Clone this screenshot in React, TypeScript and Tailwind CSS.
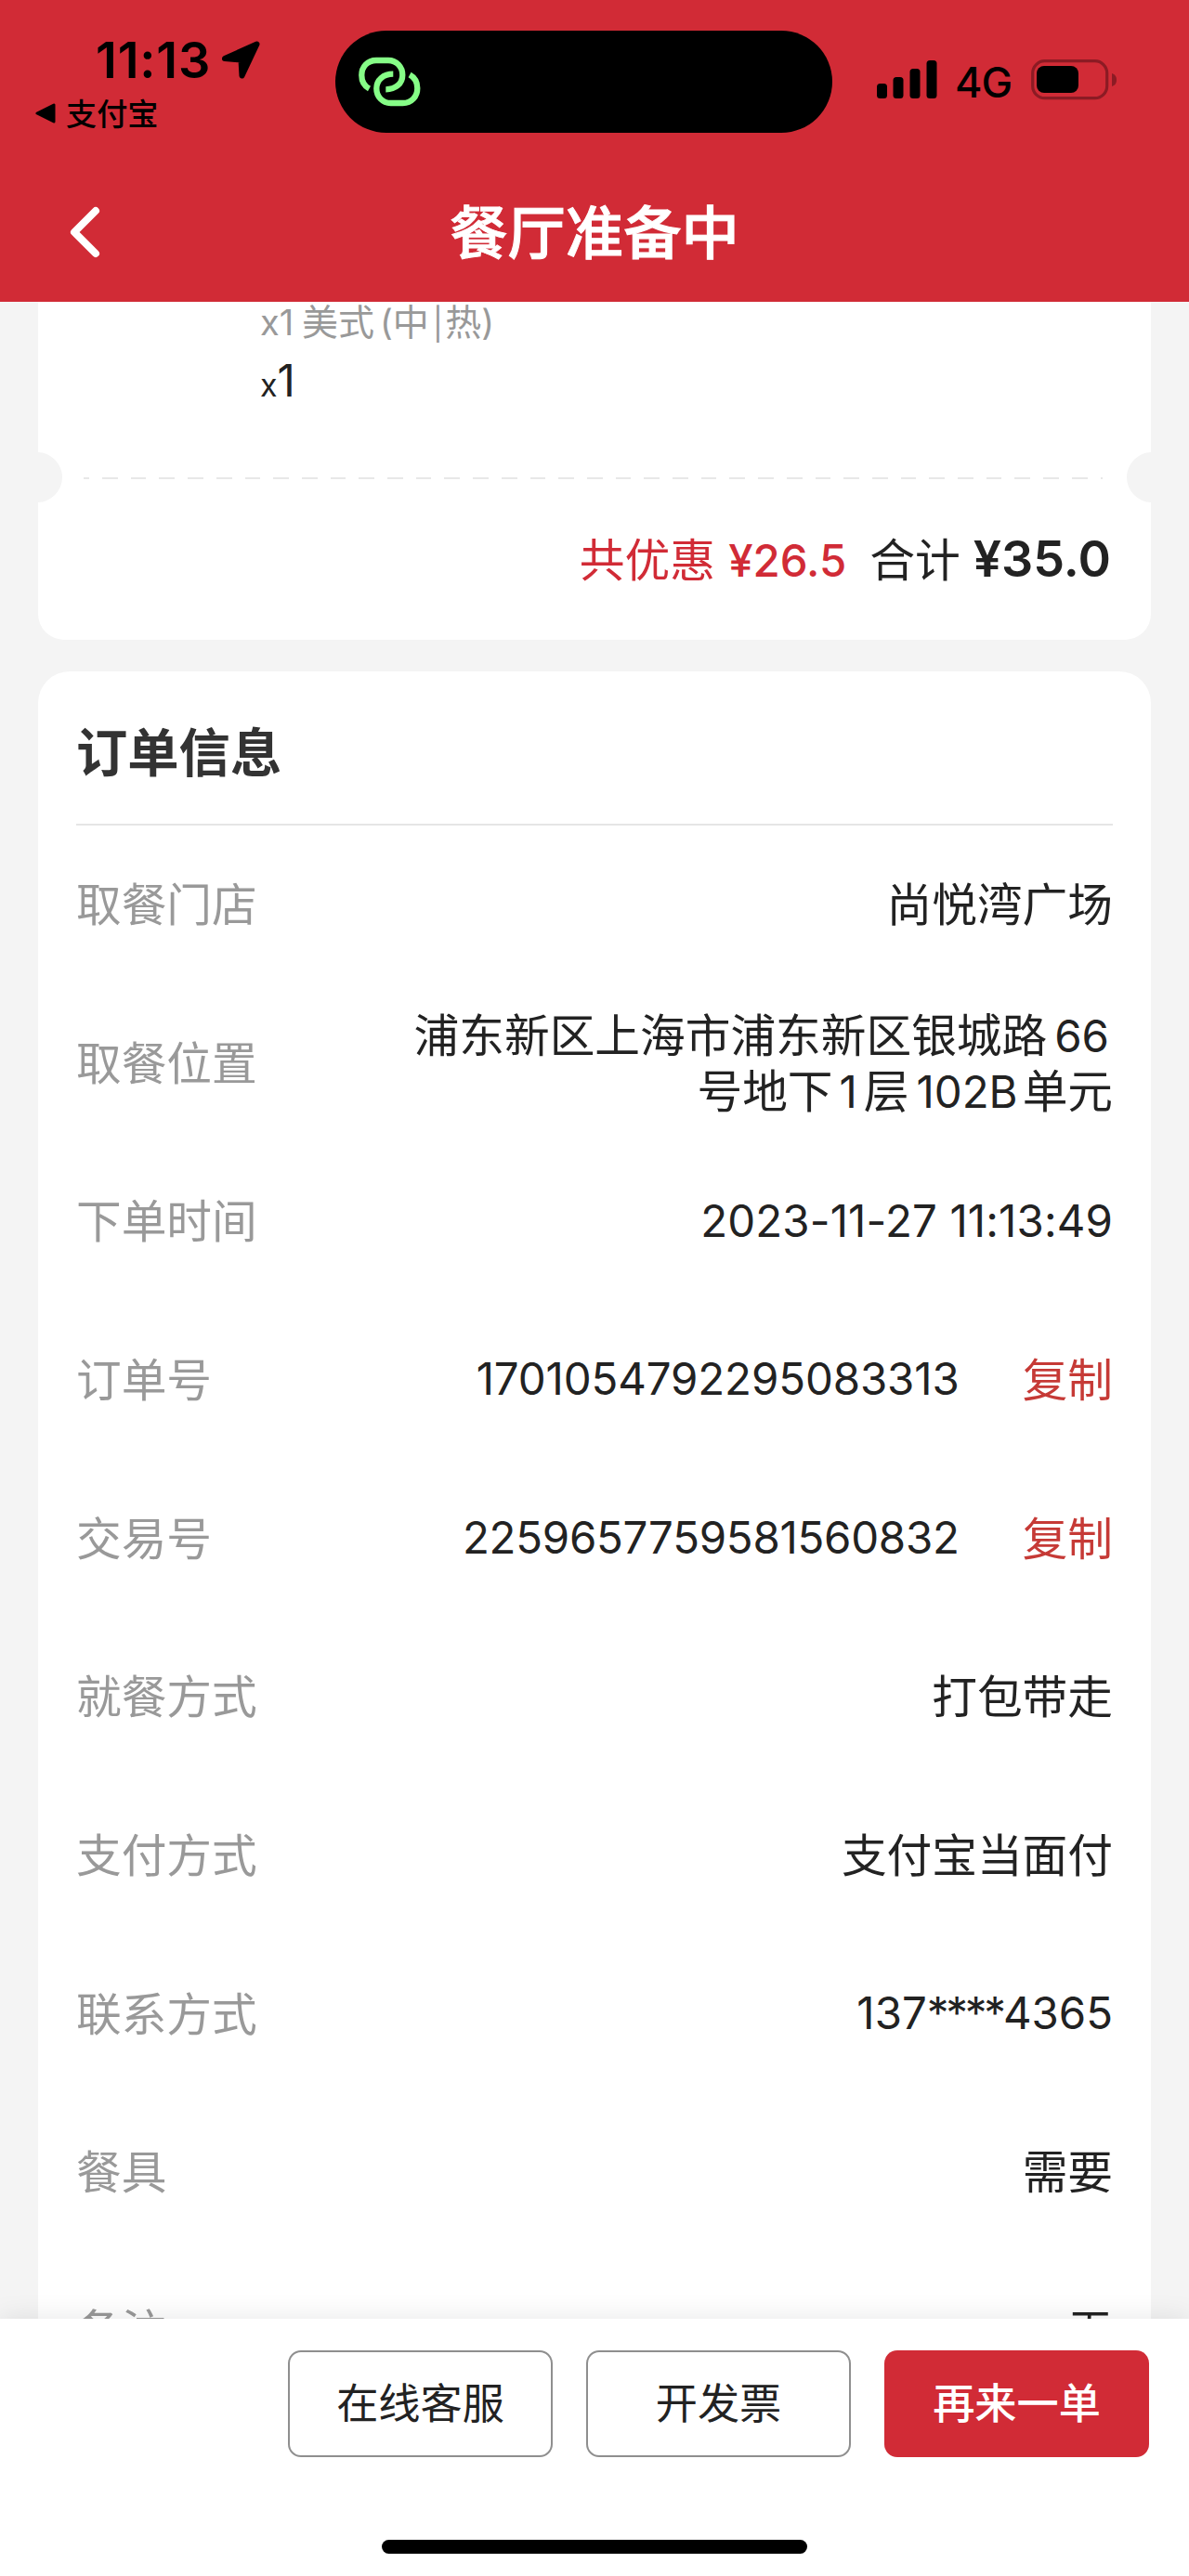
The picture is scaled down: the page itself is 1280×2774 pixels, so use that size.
import type { ReactNode } from 'react';

interface OrderRow {
  label: string;
  value: ReactNode;
  copyable?: boolean;
}

const num = "font-['Inter'] text-[47.4px]";

const orderRows: OrderRow[] = [
  { label: '取餐门店', value: '尚悦湾广场' },
  {
    label: '取餐位置',
    value: (
      <div className="pt-[3px]">
        浦东新区上海市浦东新区银城路
        <span className={`${num} ml-[8px] mr-[4px]`}>66</span>
        <br />
        号地下
        <span className={`${num} mx-[7px]`}>1</span>
        层
        <span className={`${num} ml-[8px] mr-[5px]`}>102B</span>
        单元
      </div>
    ),
  },
  { label: '下单时间', value: <span className={`${num} tracking-[0.15px]`}>2023-11-27 11:13:49</span> },
  { label: '订单号', value: <span className={`${num} tracking-[-0.1px]`}>1701054792295083313</span>, copyable: true },
  { label: '交易号', value: <span className={`${num} tracking-[-0.25px]`}>2259657759581560832</span>, copyable: true },
  { label: '就餐方式', value: '打包带走' },
  { label: '支付方式', value: '支付宝当面付' },
  {
    label: '联系方式',
    value: (
      <span className={num}>
        137<span className="tracking-[-3.2px]">****</span>4365
      </span>
    ),
  },
  { label: '餐具', value: '需要' },
  { label: '备注', value: '无' },
];

function StatusBar() {
  return (
    <div className="flex h-[160px] text-black">
      <div className="w-[361px] pt-[37px]">
        <div className="flex h-[56px] items-center pl-[103px]">
          <span className="w-[123px] font-['Inter'] text-[54px] font-semibold leading-none tracking-[0.8px]">11:13</span>
          <svg className="ml-[12px] h-[42px] w-[42px]" viewBox="0 0 42 42">
            <path d="M38.5 3.5 L22.5 37.5 L21.5 20.5 L4 19 Z" fill="#000" stroke="#000" strokeWidth="6" strokeLinejoin="round" />
          </svg>
        </div>
        <div className="flex h-[58px] items-center gap-[11px] pl-[38px]">
          <svg className="h-[22px] w-[22px]" viewBox="0 0 22 22">
            <path d="M2 11 L20 2 V20 Z" fill="#000" stroke="#000" strokeWidth="3" strokeLinejoin="round" />
          </svg>
          <span className="pb-[3px] text-[33.2px] font-medium leading-none">支付宝</span>
        </div>
      </div>

      {/* Dynamic island */}
      <div className="mt-[33px] flex h-[110px] w-[535px] items-center rounded-full bg-black pl-[24px]">
        <svg className="h-[66px] w-[70px]" viewBox="0 0 70 66" fill="none" stroke="#86fd87" strokeWidth="6.3">
          <path d="M12.5 40.5 C7 37.5 4.3 32 4.3 26 C4.3 17 10.5 10 20 10 H33 C42 10 48.3 17 48.3 25.7 C48.3 35 41 41.3 30.3 41.3" />
          <path
            d="M12.5 40.5 C7 37.5 4.3 32 4.3 26 C4.3 17 10.5 10 20 10 H33 C42 10 48.3 17 48.3 25.7 C48.3 35 41 41.3 30.3 41.3"
            transform="rotate(180 34.3 33)"
          />
        </svg>
      </div>

      <div className="flex h-[44px] pl-[48px] pt-[64px]">
        <svg className="h-[44px] w-[66px]" viewBox="0 0 66 44" fill="#000">
          <rect x="0" y="26" width="11" height="16" rx="3.5" />
          <rect x="17.5" y="19" width="11" height="23" rx="3.5" />
          <rect x="35.5" y="10" width="11" height="32" rx="3.5" />
          <rect x="53.5" y="1" width="11" height="41" rx="3.5" />
        </svg>
        <span className="ml-[18px] w-[61px] font-['Inter'] text-[45px] font-medium leading-[50px] tracking-[-1px]">4G</span>
        <svg className="ml-[20px] h-[44px] w-[96px]" viewBox="0 0 96 44">
          <rect x="2.7" y="1.7" width="80" height="40" rx="13" fill="none" stroke="#8c1b24" strokeWidth="3.2" />
          <rect x="7" y="7" width="45" height="29" rx="8" fill="#000" />
          <path d="M88 15 C91 16 93 18 93 22 C93 26 91 28 88 29 Z" fill="#8c1b24" />
        </svg>
      </div>
    </div>
  );
}

function Header() {
  return (
    <header className="h-[325px] shrink-0 bg-[#d12b36]">
      <StatusBar />
      <div className="grid h-[180px] grid-cols-[1fr_auto_1fr] items-center">
        <svg className="ml-[73px] h-[60px] w-[36px]" viewBox="0 0 36 60" fill="none">
          <path d="M30 7 L7 30 L30 53" stroke="#fff" strokeWidth="8" strokeLinecap="round" strokeLinejoin="round" />
        </svg>
        <h1 className="pb-[5px] text-[62.3px] font-medium leading-none text-white [-webkit-text-stroke:1px_#fff]">
          餐厅准备中
        </h1>
      </div>
    </header>
  );
}

function SummaryCard() {
  return (
    <section className="relative h-[364px] shrink-0 overflow-hidden rounded-b-[28px] bg-white">
      <div className="h-[189px] pl-[239px] text-[39px] text-[#999]">
        <p className="h-[45px] leading-[39px]">
          <span className="font-['Inter'] text-[38px]">x1</span> 美式
          <span className="ml-[6px] font-['Inter'] text-[38px]">(</span>中
          <span className="ml-[4px] font-['Inter'] text-[34px]">|</span>
          <span className="ml-[2px]">热</span>
          <span className="font-['Inter'] text-[38px]">)</span>
        </p>
        <p className="mt-[11px] font-['Inter'] leading-[58px] text-[#222]">
          <span className="text-[34px]">x</span>
          <span className="text-[47.4px]">1</span>
        </p>
      </div>

      {/* Ticket perforation */}
      <div className="absolute -left-[28px] top-[162px] size-[54px] rounded-full bg-[#f4f4f4]" />
      <div className="absolute -right-[28px] top-[162px] size-[54px] rounded-full bg-[#f4f4f4]" />
      <div className="ml-[49px] mr-[52px] h-[2px] bg-[repeating-linear-gradient(90deg,#e8e8e8_0_6px,transparent_6px_20px,#e8e8e8_20px_30.7px)]" />

      <div className="flex items-baseline justify-end pr-[43px] pt-[48px] text-[48.8px] leading-[72px]">
        <span className="text-[#d12b36]">共优惠</span>
        <span className="ml-[14px] font-['Inter'] text-[47.4px] font-medium text-[#d12b36]">¥26.5</span>
        <span className="ml-[25px] text-[#222]">合计</span>
        <span className="ml-[14px] font-['Inter'] text-[53.8px] font-semibold text-[#222]">¥35.0</span>
      </div>
    </section>
  );
}

function InfoRow({ label, value, copyable }: OrderRow) {
  return (
    <div className="flex h-[170.7px] shrink-0 items-center justify-between pb-[6px] text-[48.7px] leading-[57px]">
      <span className="text-[#999]">{label}</span>
      <div className="flex items-center text-right text-[#222]">
        <div>{value}</div>
        {copyable && <button className="ml-[68px] text-[#c63a36]">复制</button>}
      </div>
    </div>
  );
}

export default function App() {
  return (
    <div className="flex h-[2774px] w-[1280px] flex-col overflow-hidden bg-[#f4f4f4] font-['Noto_Sans_CJK_SC',sans-serif]">
      <Header />

      <main className="flex min-h-0 flex-1 flex-col gap-[34px] overflow-hidden px-[41px]">
        <SummaryCard />
        <section className="shrink-0 rounded-[34px] bg-white px-[41px]">
          <h2 className="h-[166px] border-b-2 border-[#e5e5e5] text-[55.3px] font-bold leading-[169px] text-[#333]">
            订单信息
          </h2>
          {orderRows.map((row) => (
            <InfoRow key={row.label} {...row} />
          ))}
        </section>
      </main>

      <footer className="relative flex h-[277px] shrink-0 flex-col items-center bg-white shadow-[0_0_28px_rgba(0,0,0,0.1)]">
        <div className="flex gap-[36px] self-end pr-[43px] pt-[34px] text-[45.2px] text-[#222]">
          <button className="h-[115px] w-[285px] rounded-[14px] border-2 border-[#8f8f8f] pb-[5px]">在线客服</button>
          <button className="h-[115px] w-[285px] rounded-[14px] border-2 border-[#8f8f8f] pb-[5px]">开发票</button>
          <button className="h-[115px] w-[285px] rounded-[14px] bg-[#d12b36] pb-[5px] font-medium text-white">再来一单</button>
        </div>
        <div className="mt-[89px] h-[15px] w-[458px] rounded-full bg-black" />
      </footer>
    </div>
  );
}
